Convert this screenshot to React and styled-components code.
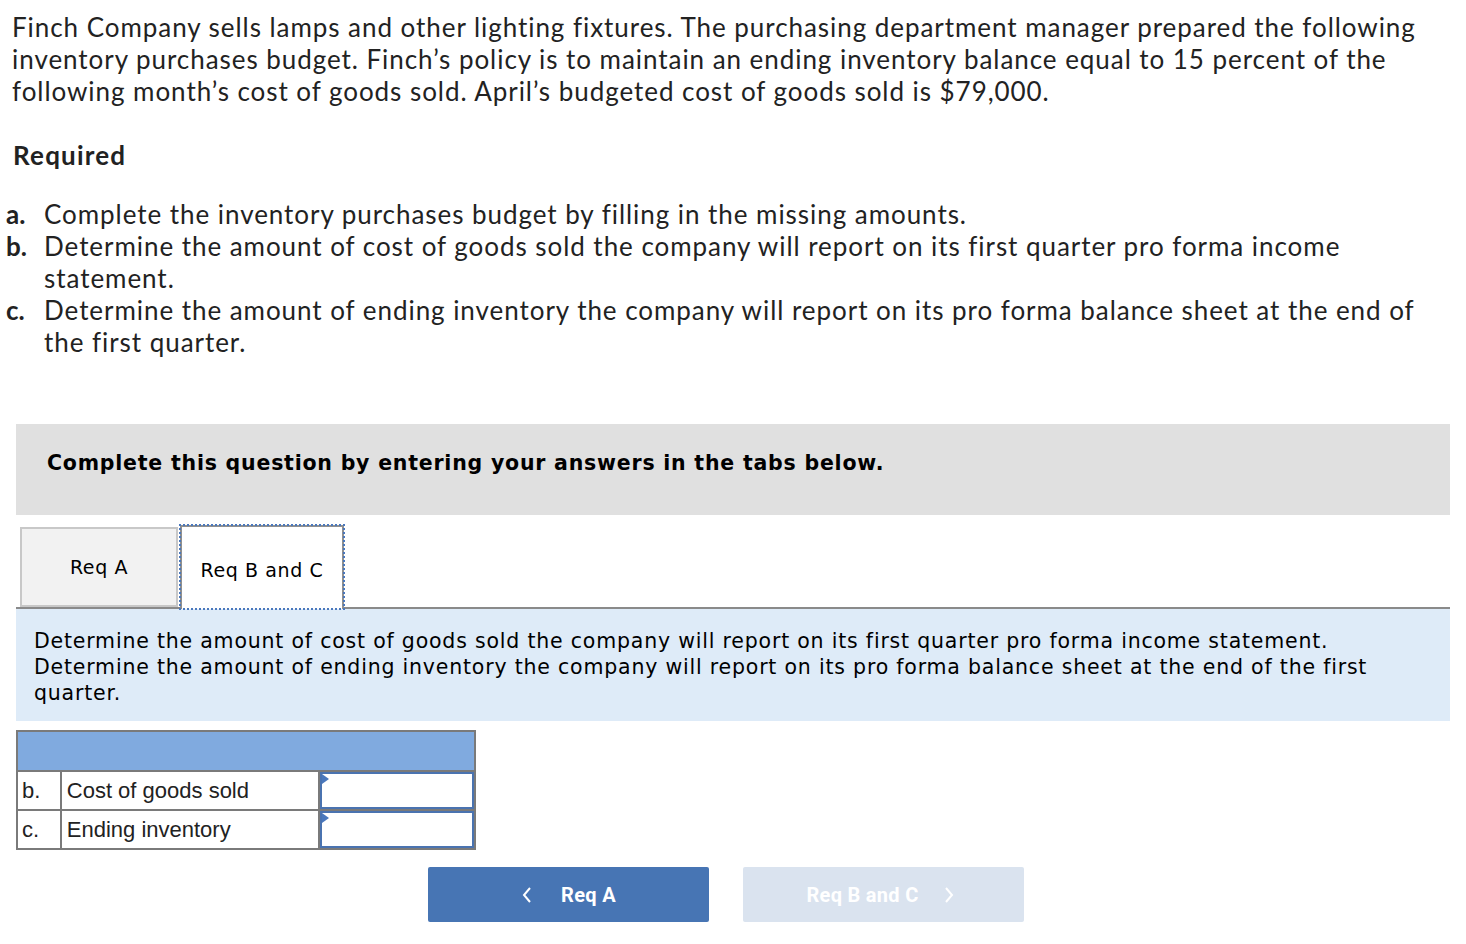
import React from 'react';
import styled, { createGlobalStyle } from 'styled-components';

const GlobalStyle = createGlobalStyle`
  body {
    margin: 0;
    background: #fff;
    font-family: Lato, "Open Sans", sans-serif;
    color: #222;
  }
`

const Page = styled.div`
  width: 1466px;
  padding: 11px 16px 20px 16px;
  box-sizing: border-box;
`
const Intro = styled.p`
  font-family: Lato, sans-serif;
  font-size: 26px;
  letter-spacing: 0.95px;
  font-variant-ligatures: none;
  line-height: 32px;
  margin: 0 0 0 -4px;
  color: #222;
`
const Required = styled.h3`
  font-family: Lato, sans-serif;
  font-weight: 700;
  font-size: 26px;
  letter-spacing: 1.2px;
  line-height: 32px;
  margin: 32px 0 0 -3px;
  color: #222;
`
const ReqList = styled.ol`
  list-style: none;
  margin: 27px 25px 0 -10px;
  padding: 0;
  font-variant-ligatures: none;
`
const ReqItem = styled.li`
  display: flex;
  font-size: 26px;
  letter-spacing: 0.95px;
  line-height: 32px;
`
const ReqLetter = styled.span`
  font-weight: 700;
  width: 38px;
  letter-spacing: 0;
  flex-shrink: 0;
`
const ReqText = styled.span`
  flex: 1;
`
const Banner = styled.div`
  margin-top: 66px;
  background: #e0e0e0;
  height: 91px;
  display: flex;
  align-items: center;
  padding: 0 0 13px 31px;
  box-sizing: border-box;
  font-family: "DejaVu Sans", Verdana, sans-serif;
  font-weight: 700;
  font-size: 20.5px;
  letter-spacing: 0.78px;
  color: #000;
`
const TabBar = styled.div`
  display: flex;
  align-items: flex-end;
  margin-top: 8px;
  padding-left: 4px;
  border-bottom: 2px solid #8a8a8a;
  height: 84px;
`
const Tab = styled.div`
  box-sizing: border-box;
  display: flex;
  align-items: center;
  justify-content: center;
  font-family: "DejaVu Sans", Verdana, sans-serif;
  font-size: 19px;
  letter-spacing: 0.6px;
  color: #000;
  width: ${p => (p.active ? '164px' : '158px')};
  height: ${p => (p.active ? '84px' : '80px')};
  margin-left: ${p => (p.active ? '2px' : '0')};
  margin-bottom: ${p => (p.active ? '-2px' : '0')};
  background: ${p => (p.active ? '#fff' : '#f2f2f2')};
  border: ${p => (p.active ? '2px solid #8f8f8f' : '2px solid #c8c8c8')};
  border-bottom: ${p => (p.active ? 'none' : '2px solid #c8c8c8')};
  outline: ${p => (p.active ? '2px dotted #4a78bd' : 'none')};
  outline-offset: -1px;
  padding-top: ${p => (p.active ? '4px' : '0')};
`
const Instructions = styled.div`
  background: #deebf8;
  padding: 19px 18px 15px 18px;
  font-family: "DejaVu Sans", Verdana, sans-serif;
  font-size: 20.5px;
  letter-spacing: 0.8px;
  line-height: 26px;
  color: #000;
`
const Table = styled.table`
  margin-top: 9px;
  border-collapse: collapse;
  width: 460px;
  font-family: "Liberation Sans", Arial, sans-serif;
  font-size: 22px;
  color: #222;
`
const HeadCell = styled.td`
  background: #80aadf;
  border: 2px solid #7a7a7a;
  height: 36px;
`
const Cell = styled.td`
  border: 2px solid #7a7a7a;
  height: 37px;
  padding: 0 0 0 ${p => p.pad || '4px'};
  width: ${p => p.w};
  box-sizing: border-box;
`
const InputCell = styled.td`
  border: 2px solid #7a7a7a;
  padding: 0;
  width: 156px;
  position: relative;
`
const AmountInput = styled.div`
  height: 37px;
  border: 2px solid #4a73b0;
  box-sizing: border-box;
  background: #fff;
`
const Caret = styled.span`
  position: absolute;
  left: 2px;
  top: 2px;
  width: 0;
  height: 0;
  border-top: 5px solid transparent;
  border-bottom: 5px solid transparent;
  border-left: 7px solid #4a78bd;
`
const NavRow = styled.div`
  display: flex;
  justify-content: center;
  gap: 34px;
  margin-top: 17px;
  padding-right: 14px;
`
const NavButton = styled.button`
  width: 281px;
  height: 55px;
  border: none;
  border-radius: 2px;
  background: ${p => (p.disabled ? '#dae3ef' : '#4775b4')};
  color: #fff;
  font-family: Roboto, "Liberation Sans", sans-serif;
  font-weight: 700;
  font-size: 20px;
  letter-spacing: 0.3px;
  display: flex;
  align-items: center;
  justify-content: center;
  gap: ${p => (p.disabled ? '24px' : '28px')};
  padding: 0 ${p => (p.disabled ? '6px' : '0')} 0 0;
`

const Chevron = ({ dir }) => (
  <svg width="12" height="18" viewBox="0 0 12 18" fill="none">
    <path
      d={dir === 'left' ? 'M9 2 L3 9 L9 16' : 'M3 2 L9 9 L3 16'}
      stroke="#fff"
      strokeWidth="2"
    />
  </svg>
)

export default function App() {
  return (
    <Page>
      <GlobalStyle />
      <Intro>
        Finch Company sells lamps and other lighting fixtures. The purchasing department manager prepared the following
        inventory purchases budget. Finch’s policy is to maintain an ending inventory balance equal to 15 percent of the
        following month’s cost of goods sold. April’s budgeted cost of goods sold is $79,000.
      </Intro>
      <Required>Required</Required>
      <ReqList>
        <ReqItem>
          <ReqLetter>a.</ReqLetter>
          <ReqText>Complete the inventory purchases budget by filling in the missing amounts.</ReqText>
        </ReqItem>
        <ReqItem>
          <ReqLetter>b.</ReqLetter>
          <ReqText>
            Determine the amount of cost of goods sold the company will report on its first quarter pro forma income statement.
          </ReqText>
        </ReqItem>
        <ReqItem>
          <ReqLetter>c.</ReqLetter>
          <ReqText>
            Determine the amount of ending inventory the company will report on its pro forma balance sheet at the end of the first quarter.
          </ReqText>
        </ReqItem>
      </ReqList>

      <Banner>Complete this question by entering your answers in the tabs below.</Banner>

      <TabBar>
        <Tab>Req A</Tab>
        <Tab active>Req B and C</Tab>
      </TabBar>

      <Instructions>
        Determine the amount of cost of goods sold the company will report on its first quarter pro forma income statement.
        Determine the amount of ending inventory the company will report on its pro forma balance sheet at the end of the first
        quarter.
      </Instructions>

      <Table>
        <tbody>
          <tr>
            <HeadCell colSpan={3} />
          </tr>
          <tr>
            <Cell w="44px">b.</Cell>
            <Cell w="260px" pad="5px">Cost of goods sold</Cell>
            <InputCell>
              <AmountInput />
              <Caret />
            </InputCell>
          </tr>
          <tr>
            <Cell w="44px">c.</Cell>
            <Cell w="260px" pad="5px">Ending inventory</Cell>
            <InputCell>
              <AmountInput />
              <Caret />
            </InputCell>
          </tr>
        </tbody>
      </Table>

      <NavRow>
        <NavButton>
          <Chevron dir="left" />
          <span>Req A</span>
        </NavButton>
        <NavButton disabled>
          <span>Req B and C</span>
          <Chevron dir="right" />
        </NavButton>
      </NavRow>
    </Page>
  );
}
